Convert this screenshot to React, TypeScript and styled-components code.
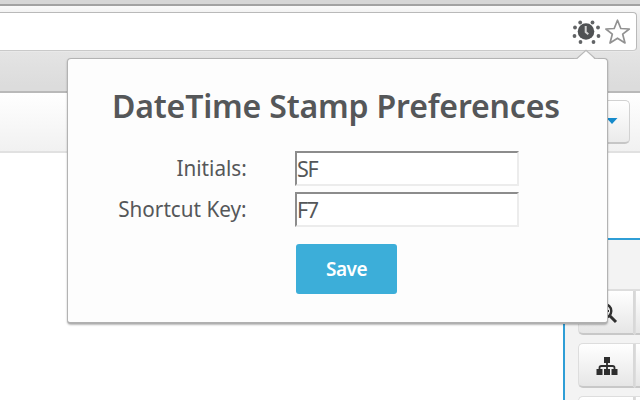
import React from "react";
import styled, { createGlobalStyle } from "styled-components";

const GlobalStyle = createGlobalStyle`
  *, *::before, *::after { box-sizing: border-box; }
  body { margin: 0; background: #fff; overflow: hidden; }
`;

const Page = styled.div`
  position: relative;
  display: flex;
  flex-direction: column;
  width: 640px;
  height: 400px;
  overflow: hidden;
  background: #fff;
  color: #555759;
  font-family: "Noto Sans", "Open Sans", sans-serif;
`;

const TabStrip = styled.div`
  flex: 0 0 6px;
  background: #d6d6d6;
  border-bottom: 2px solid #a2a2a2;
`;

const BrowserBar = styled.div`
  flex: 0 0 87px;
  padding: 6px 3px 0 0;
  background: linear-gradient(#fafafa 0, #eeeeee 10px, #e4e4e4 45px, #dcdcdc 80px);
  border-bottom: 2px solid #b9b9b9;
`;

const AddressBar = styled.div`
  display: flex;
  justify-content: flex-end;
  align-items: center;
  gap: 4px;
  height: 39px;
  padding: 0 5px 2px 0;
  background: #fff;
  border: 1px solid #b9b9b9;
  border-bottom-color: #c9c9c9;
  border-left: 0;
  border-radius: 0 4px 4px 0;
  box-shadow: 0 1px 0 #e9e9e9;
`;

const AppBar = styled.div`
  display: flex;
  justify-content: flex-end;
  flex: 0 0 60px;
  padding: 7px 10px 0 0;
  background: linear-gradient(#fff, #f1f1f1);
  border-bottom: 2px solid #e1e1e1;
`;

const MenuButton = styled.div`
  display: flex;
  align-items: center;
  justify-content: flex-end;
  width: 60px;
  height: 44px;
  padding: 0 11px 1px 0;
  border: 1px solid #d2d2d2;
  border-bottom: 2px solid #c6c6c6;
  border-radius: 5px;
  background: linear-gradient(#fff, #ebebeb);
`;

const Workspace = styled.div`
  display: flex;
  justify-content: flex-end;
  flex: 1;
  padding-top: 85px;
`;

const SidePanel = styled.div`
  width: 77px;
  height: 162px;
  border-top: 2px solid #2f9ed6;
  border-left: 2px solid #2f9ed6;
  background: #f3f3f3;
  overflow: hidden;
`;

const PanelHeader = styled.div`
  height: 50px;
  border-bottom: 1px solid #dedede;
`;

const ToolGrid = styled.div`
  display: grid;
  grid-template-columns: 57px 57px;
  grid-auto-rows: 45px;
  row-gap: 8px;
  padding-left: 13px;
`;

const ToolButton = styled.div<{ $first?: boolean }>`
  display: flex;
  align-items: center;
  justify-content: center;
  padding: 1px 0 0 1px;
  border: 1px solid #dddddd;
  border-right: 2px solid #d8d8d8;
  border-bottom: 2px solid #c8c8c8;
  border-radius: ${(p) => (p.$first ? "5px 0 0 5px" : "0")};
  background: linear-gradient(#fff, #e6e6e6);
`;

const Popup = styled.div`
  position: absolute;
  left: 67px;
  top: 58px;
  width: 540.5px;
  height: 266px;
  padding: 24px 0 0;
  background: #fdfdfd;
  border: 1px solid #b3b3b3;
  border-bottom: 2px solid #b0b0b0;
  border-radius: 4px;
  box-shadow: 0 1px 2px rgba(0, 0, 0, 0.28);
`;

const Pointer = styled.svg`
  position: absolute;
  left: 506px;
  top: -10px;
`;

const Title = styled.h1`
  margin: 0 0 22px 44px;
  height: 46px;
  font-size: 32px;
  line-height: 46px;
  font-weight: 600;
  letter-spacing: -0.18px;
  white-space: nowrap;
`;

const Form = styled.div`
  display: grid;
  grid-template-columns: 178px 224px;
  grid-auto-rows: 35px;
  column-gap: 49px;
  row-gap: 6px;
`;

const Label = styled.label`
  justify-self: end;
  font-size: 22px;
  line-height: 33px;
  white-space: nowrap;
  transform: translateX(1px) scaleX(0.94);
  transform-origin: right;
`;

const Input = styled.input`
  width: 224px;
  height: 35px;
  padding: 0 0 1px;
  border: 2px solid;
  border-color: #8c8c8c #ececec #ececec #8c8c8c;
  border-radius: 0;
  outline: 0;
  background: #fff;
  color: #555759;
  font: 21.5px "Noto Sans", "Open Sans", sans-serif;
  letter-spacing: -1.4px;
`;

const SaveButton = styled.button`
  display: block;
  width: 101px;
  height: 50px;
  margin: 17px 0 0 228px;
  padding: 0;
  border: 0;
  border-radius: 3px;
  background: #3caed9;
  color: #fff;
  font: 600 19px/50px "Noto Sans", "Open Sans", sans-serif;
  letter-spacing: -0.5px;
`;

const DOTS = [[3, 10.5], [8.2, 5.5], [20.5, 5.5], [26, 10.5], [2.5, 19], [26.5, 19], [8.5, 25], [21.5, 25]];

const ClockIcon = () => (
  <svg width="29" height="28" viewBox="0 0 29 28">
    {DOTS.map(([x, y]) => (
      <circle key={`${x}-${y}`} cx={x} cy={y} r="1.9" fill="#626466" />
    ))}
    <circle cx="14" cy="14.5" r="8.3" fill="#505254" />
    <path d="M13.7 9v6l2.6 2.2" fill="none" stroke="#d4d4d4" strokeWidth="2" />
  </svg>
);

const StarIcon = () => (
  <svg width="26" height="28" viewBox="0 0 26 28">
    <path
      d="M12.5 3.2 15.8 11.5 24.3 12 17.7 17.2 20 26 12.5 21.2 5 26 7.3 17.2 0.9 12 9.2 11.5Z"
      fill="#fff"
      stroke="#929292"
      strokeWidth="1.7"
      strokeLinejoin="round"
    />
  </svg>
);

const CaretIcon = () => (
  <svg width="12" height="6" viewBox="0 0 12 6">
    <path d="M0.5 0h11L6 6Z" fill="#158acb" />
  </svg>
);

const ZoomIcon = () => (
  <svg width="22" height="22" viewBox="0 0 22 22" fill="none" stroke="#303030">
    <circle cx="8.5" cy="9" r="6.8" strokeWidth="2.4" />
    <path d="m14 14 6 6" strokeWidth="3" />
    <path d="M5 9h8M9 5v8" strokeWidth="1.8" />
  </svg>
);

const SitemapIcon = () => (
  <svg width="22" height="18" viewBox="0 0 22 18" fill="#2e2e2e">
    <path d="M8 0h6v6H8ZM0.5 12h6v6h-6ZM8 12h6v6H8ZM15.5 12h6v6h-6Z" />
    <path d="M11 5v8M3.5 13v-2.2q0-1.8 2-1.8h11q2 0 2 1.8V13" fill="none" stroke="#2e2e2e" strokeWidth="1.8" />
  </svg>
);

export default function App() {
  return (
    <Page>
      <GlobalStyle />
      <TabStrip />
      <BrowserBar>
        <AddressBar>
          <ClockIcon />
          <StarIcon />
        </AddressBar>
      </BrowserBar>
      <AppBar>
        <MenuButton>
          <CaretIcon />
        </MenuButton>
      </AppBar>
      <Workspace>
        <SidePanel>
          <PanelHeader />
          <ToolGrid>
            <ToolButton $first>
              <ZoomIcon />
            </ToolButton>
            <ToolButton />
            <ToolButton $first>
              <SitemapIcon />
            </ToolButton>
            <ToolButton />
            <ToolButton $first />
            <ToolButton />
          </ToolGrid>
        </SidePanel>
      </Workspace>
      <Popup>
        <Pointer width="24" height="12" viewBox="0 0 24 12">
          <path d="M0 12v-1.5h2L12 1.5l9 9h3V12Z" fill="#fdfdfd" />
          <path d="M0 9.5H3L12 1.2 21 9.5h3" fill="none" stroke="#b9b9b9" strokeWidth="1.2" />
        </Pointer>
        <Title>DateTime Stamp Preferences</Title>
        <Form>
          <Label htmlFor="initials">Initials:</Label>
          <Input id="initials" defaultValue="SF" />
          <Label htmlFor="shortcut">Shortcut Key:</Label>
          <Input id="shortcut" defaultValue="F7" />
        </Form>
        <SaveButton>Save</SaveButton>
      </Popup>
    </Page>
  );
}
